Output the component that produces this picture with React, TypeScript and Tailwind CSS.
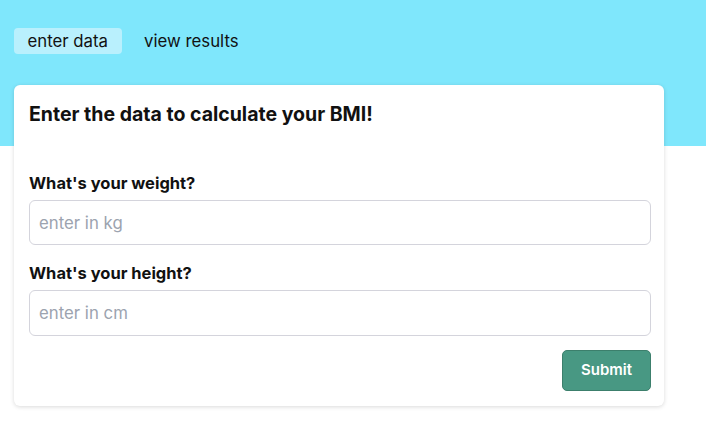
export default function App() {
  return (
    <div className="min-h-[436px] bg-white font-['Inter',sans-serif] text-[#111]">
      <header className="h-[146px] bg-[#7fe7fc] px-[14px] pt-[28px]">
        <nav className="flex gap-[9px]">
          <button className="h-[26px] rounded-[4px] bg-[#b9f0fd] px-[13.5px] text-[16.8px] leading-[26px]">
            enter data
          </button>
          <button className="h-[26px] rounded-[4px] px-[13.5px] text-[16.8px] leading-[26px]">
            view results
          </button>
        </nav>
      </header>

      <main className="px-[14px]">
        <div className="-mt-[61px] w-[650px] rounded-[6px] bg-white pt-[15px] pr-[13px] pb-[15px] pl-[15px] shadow-[0_1px_4px_rgba(0,0,0,0.15)]">
          <h1 className="text-[19.5px] font-bold leading-[28px]">Enter the data to calculate your BMI!</h1>

          <form className="mt-[43px] flex flex-col" onSubmit={(e) => e.preventDefault()}>
            <label className="text-[16.5px] font-bold leading-[24px]">What's your weight?</label>
            <input
              placeholder="enter in kg"
              className="mt-[5px] h-[45px] w-full rounded-[6px] border border-[#d4d4dc] px-[9px] text-[16.8px] outline-none placeholder:text-[#9ca3af]"
            />

            <label className="mt-[16px] text-[16.5px] font-bold leading-[24px]">What's your height?</label>
            <input
              placeholder="enter in cm"
              className="mt-[5px] h-[46px] w-full rounded-[6px] border border-[#d4d4dc] px-[9px] text-[16.8px] outline-none placeholder:text-[#9ca3af]"
            />

            <div className="mt-[14px] flex justify-end">
              <button className="h-[41px] w-[89px] rounded-[5px] border border-[#3c7f6c] bg-[#489883] text-[15px] font-semibold text-white">
                Submit
              </button>
            </div>
          </form>
        </div>
      </main>
    </div>
  )
}
